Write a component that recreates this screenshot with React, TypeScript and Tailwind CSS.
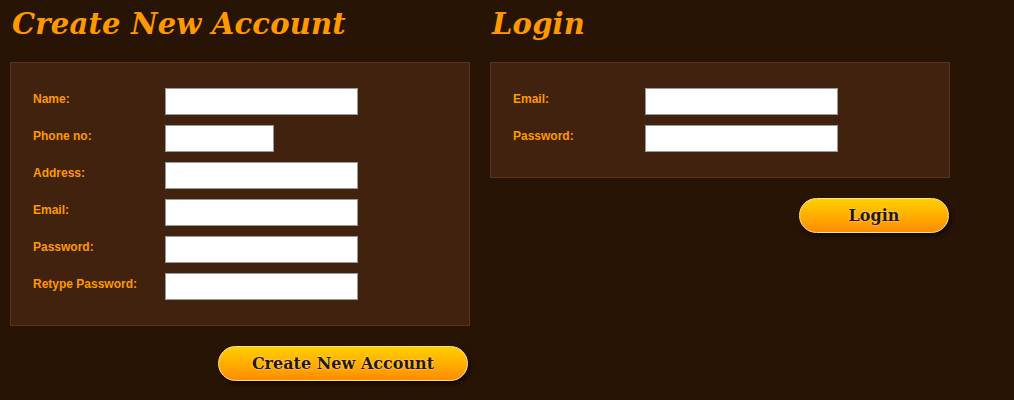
const signupFields = [
  { label: "Name:", width: "w-[193px]" },
  { label: "Phone no:", width: "w-[109px]" },
  { label: "Address:", width: "w-[193px]" },
  { label: "Email:", width: "w-[193px]" },
  { label: "Password:", width: "w-[193px]" },
  { label: "Retype Password:", width: "w-[193px]" },
];

const loginFields = [
  { label: "Email:", width: "w-[193px]" },
  { label: "Password:", width: "w-[193px]" },
];

function Field({ label, width }: { label: string; width: string }) {
  return (
    <div className="flex h-[27px] items-start">
      <label className="w-[132px] pt-[2px] text-[12px] font-bold text-[#ff9900]">
        {label}
      </label>
      <input
        className={`${width} h-[27px] border border-[#999999] bg-white`}
      />
    </div>
  );
}

function Heading({ children }: { children: string }) {
  return (
    <h2 className="pl-[2px] pt-[4px] text-[29px] leading-[40px] font-bold italic text-[#ff9900] [font-family:'DejaVu_Serif',serif] tracking-[0.2px]">
      {children}
    </h2>
  );
}

function PillButton({ children, width }: { children: string; width: string }) {
  return (
    <button
      className={`${width} h-[35px] rounded-full border border-[#ffe08a] bg-gradient-to-b from-[#ffcf00] to-[#ff8c00] text-[16px] font-bold text-[#2a1606] shadow-[2px_3px_4px_rgba(0,0,0,0.6)] [font-family:'DejaVu_Serif',serif] [text-shadow:0_0_2px_#fff3b0]`}
    >
      {children}
    </button>
  );
}

export default function App() {
  return (
    <div className="h-[400px] w-[1014px] bg-[#281405] [font-family:'Liberation_Sans',Arial,sans-serif]">
      <div className="flex gap-[20px] pl-[10px]">
        <section className="w-[460px]">
          <Heading>Create New Account</Heading>
          <div className="mt-[18px] flex h-[264px] flex-col gap-[10px] border border-[#5c3219] bg-[#40220e] pl-[22px] pt-[25px]">
            {signupFields.map((f) => (
              <Field key={f.label} {...f} />
            ))}
          </div>
          <div className="mt-[20px] flex justify-end pr-[2px]">
            <PillButton width="w-[250px]">Create New Account</PillButton>
          </div>
        </section>
        <section className="w-[460px]">
          <Heading>Login</Heading>
          <div className="mt-[18px] flex h-[116px] flex-col gap-[10px] border border-[#5c3219] bg-[#40220e] pl-[22px] pt-[25px]">
            {loginFields.map((f) => (
              <Field key={f.label} {...f} />
            ))}
          </div>
          <div className="mt-[20px] flex justify-end pr-[1px]">
            <PillButton width="w-[150px]">Login</PillButton>
          </div>
        </section>
      </div>
    </div>
  );
}
